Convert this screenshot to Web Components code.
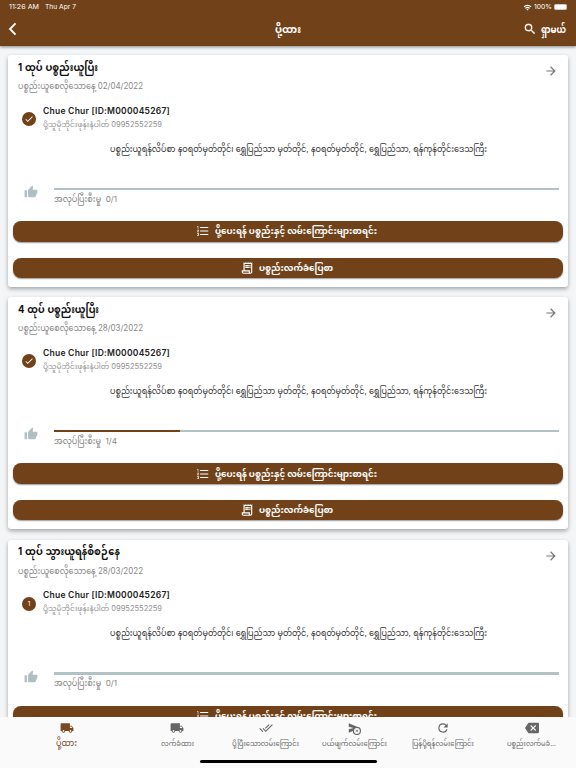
<!DOCTYPE html>
<html lang="my"><head><meta charset="utf-8"><title>ပို့ထား</title>
<style>
html,body{margin:0;height:100%;overflow:hidden}
body{font-family:Inter,"Noto Sans Myanmar",Padauk,"Noto Sans",sans-serif;background:#f3f5f7;color:#111}
</style></head><body>
<delivery-app></delivery-app>
<script>
const ICONS={
back:'<path d="M15.8 3.5 7.5 12l8.3 8.5" fill="none" stroke="currentColor" stroke-width="2.8"/>',
search:'<path d="M15.5 14h-.79l-.28-.27A6.47 6.47 0 0 0 16 9.5 6.5 6.5 0 1 0 9.5 16c1.61 0 3.09-.59 4.23-1.57l.27.28v.79l5 4.99L20.49 19zm-6 0a4.5 4.5 0 1 1 0-9 4.5 4.5 0 0 1 0 9z" stroke="currentColor" stroke-width=".4"/>',
wifi:'<path d="M1.5 9.2a15 15 0 0 1 21 0l-2.3 2.4a11.6 11.6 0 0 0-16.4 0zM5.3 13a9.6 9.6 0 0 1 13.4 0l-2.4 2.4a6.1 6.1 0 0 0-8.6 0zM9 16.8a4.3 4.3 0 0 1 6 0L12 20z"/>',
arrow:'<path d="m12 4-1.41 1.41L16.17 11H4v2h12.17l-5.58 5.59L12 20l8-8z"/>',
check:'<path d="M9 16.17 4.83 12l-1.42 1.41L9 19 21 7l-1.41-1.41z"/>',
thumb:'<path d="M1 21h4V9H1v12zm22-11c0-1.1-.9-2-2-2h-6.31l.95-4.57.03-.32c0-.41-.17-.79-.44-1.06L14.17 1 7.59 7.59C7.22 7.95 7 8.45 7 9v10c0 1.1.9 2 2 2h9c.83 0 1.54-.5 1.84-1.22l3.02-7.05c.09-.23.14-.47.14-.73z"/>',
list:'<path d="M2 17h2v.5H3v1h1v.5H2v1h3v-4H2zm1-9h1V4H2v1h1zm-1 3h1.8L2 13.1v.9h3v-1H3.200L5 10.900V10H2zm5-6v2h14V5zm0 14h14v-2H7zm0-6h14v-2H7z"/>',
receipt:'<path d="M19.5 3.500 18 2l-1.500 1.500L15 2l-1.500 1.500L12 2l-1.500 1.500L9 2 7.500 3.500 6 2v14H3v3c0 1.660 1.340 3 3 3h12c1.660 0 3-1.340 3-3V2zM15 20H6c-.55 0-1-.45-1-1v-1h10zm4-1c0 .55-.45 1-1 1s-1-.45-1-1v-3H8V5h11z"/><path d="M9 7h6v2H9zm7 0h2v2h-2zm-7 3h6v2H9zm7 0h2v2h-2z"/>',
truck:'<path d="M20 8h-3V4H3c-1.100 0-2 .9-2 2v11h2c0 1.660 1.340 3 3 3s3-1.340 3-3h6c0 1.660 1.340 3 3 3s3-1.340 3-3h2v-5zM6 18.500a1.500 1.500 0 1 1 0-3 1.500 1.500 0 0 1 0 3zm13.500-9 1.960 2.500H17V9.500zm-1.500 9a1.500 1.500 0 1 1 0-3 1.500 1.500 0 0 1 0 3z"/>',
done:'<path d="m18 7-1.410-1.410-6.340 6.340 1.410 1.410zm4.240-1.410L11.660 16.170 7.480 12l-1.410 1.410L11.660 19l12-12zM.41 13.410 6 19l1.410-1.410L1.830 12z"/>',
cancel:'<path d="M17 10c.1 0 .19.010.28.010L3 4v6l8 2-8 2v6l7-2.950A7 7 0 1 0 17 10zm0 12a5 5 0 1 1 0-10 5 5 0 0 1 0 10z"/><path d="m15.300 14.600-.7.7 1.700 1.700-1.700 1.700.7.7 1.700-1.700 1.700 1.700.7-.7-1.700-1.700 1.700-1.700-.7-.7-1.700 1.700z"/>',
refresh:'<path d="M17.650 6.350A7.960 7.960 0 0 0 12 4a8 8 0 1 0 7.730 10h-2.080A6 6 0 1 1 12 6c1.660 0 3.140.69 4.220 1.780L13 11h7V4z"/>',
erase:'<path d="M22 3H7c-.69 0-1.230.35-1.590.88L0 12l5.410 8.110c.36.53.9.89 1.590.89h15c1.100 0 2-.9 2-2V5c0-1.100-.9-2-2-2zm-3 12.590L17.590 17 14 13.410 10.410 17 9 15.590 12.590 12 9 8.410 10.410 7 14 10.590 17.590 7 19 8.410 15.410 12z"/>'};
const define=(name,render)=>customElements.define(name,class extends HTMLElement{
  connectedCallback(){if(this.shadowRoot)return;this.attachShadow({mode:'open'}).innerHTML=render(this)}
});
define('ui-icon',e=>`<style>:host{display:block;flex:none;width:${e.getAttribute('size')}px;height:${e.getAttribute('size')}px}svg{display:block;width:100%;height:100%}</style><svg viewBox="0 0 24 24" fill="currentColor">${ICONS[e.getAttribute('name')]}</svg>`);
/* One line of text condensed or widened to a given measure. */
customElements.define('fit-text',class extends HTMLElement{
  connectedCallback(){
    if(this.shadowRoot)return;
    const w=+this.getAttribute('w');
    this.attachShadow({mode:'open'}).innerHTML=`<style>:host{display:flex;align-items:center;flex:none;width:${w}px;white-space:pre}span{flex:none;transform-origin:0 50%;line-height:inherit}</style><span><slot></slot></span>`;
    const s=this.shadowRoot.querySelector('span'),m=s.getBoundingClientRect().width;
    if(m)s.style.transform=`scaleX(${w/m})`;
  }
});
define('status-bar',()=>`<style>
:host{display:flex;height:14px;padding:0 9px;align-items:center;font-size:6.8px;line-height:14px}
.r{margin-left:auto;display:flex;align-items:center;gap:2px}.d{margin-left:6px}
.b{width:11px;height:4.5px;border-radius:1.5px;background:#fff;border:.5px solid #d8c8ba}
</style><fit-text w="30">11:26 AM</fit-text><fit-text class="d" w="31">Thu Apr 7</fit-text><div class="r"><ui-icon name="wifi" size="9"></ui-icon><fit-text w="18">100%</fit-text><div class="b"></div></div>`);
define('app-header',()=>`<style>
:host{display:block;height:46px;background:#714219;color:#fff;box-shadow:0 1px 3px #0007;position:relative;z-index:2}
.bar{display:grid;grid-template-columns:1fr auto 1fr;height:30.5px;align-items:center;padding:0 10px 0 5px;font-weight:700;line-height:20px;font-size:10px}
.s{display:flex;justify-content:flex-end;align-items:center;gap:4px}.t{margin-left:5px}
</style><status-bar></status-bar><div class="bar"><ui-icon name="back" size="16"></ui-icon><fit-text class="t" w="26">ပို့ထား</fit-text><div class="s"><ui-icon name="search" size="14"></ui-icon><fit-text w="25">ရှာမယ်</fit-text></div></div>`);
define('action-button',e=>`<style>
:host{display:flex;height:20.5px;border-radius:8px;background:#714219;color:#fff;align-items:center;justify-content:center;gap:5px;font-size:9px;font-weight:700;line-height:20px;box-shadow:0 1px 1.5px #0006;padding-right:3px}
</style><ui-icon name="${e.getAttribute('icon')}" size="14"></ui-icon><slot></slot>`);
define('order-card',e=>{const a=n=>e.getAttribute(n);return `<style>
:host{display:flex;flex-direction:column;flex:none;box-sizing:border-box;height:231.5px;padding:3px 5px 0;background:#fff;border-radius:3px;box-shadow:0 2px 4px #0005}
.top{display:flex;justify-content:space-between;padding:0 5px 0 5px;height:18px}
.title{font-size:10.5px;font-weight:700;word-spacing:.6px;line-height:18px;height:18px;color:#111;margin-top:.5px}
.arrow{color:#777;margin-top:6px}
.date{font-size:8.3px;line-height:20px;height:20px;margin-left:5px;color:#888}
.person{display:flex;align-items:center;margin:7px 0 0 9px;gap:7px;height:28px}
.dot{width:14px;height:14px;border-radius:50%;background:#714219;color:#fff;display:flex;align-items:center;justify-content:center;font-size:6.5px;line-height:14px;margin-top:4px}
.name{font-size:8.8px;font-weight:600;letter-spacing:.25px;line-height:14px;height:14px;color:#222}
.phone{font-size:7.8px;line-height:13px;height:13px;color:#909090}
.addr{display:flex;justify-content:center;height:22px;line-height:22px;font-size:8.5px;margin:6.500px 0 0 20px;color:#333}
.prog{display:flex;align-items:flex-start;gap:16px;margin:25.500px 4px 0 11px;height:36px;box-sizing:border-box;color:#afbfc3}
.g{flex:1;padding-top:2.500px}.line{height:2.5px;background:#b1c1c4}.fill{height:100%;background:#714219;width:${a('done')}%}
.lab{font-size:8px;line-height:17px;height:17px;color:#858585;margin-top:.5px}
action-button+action-button{margin-top:16px}
</style>
<div class="top"><fit-text class="title" w="${a('tw')}">${a('heading')}</fit-text><ui-icon class="arrow" name="arrow" size="14"></ui-icon></div>
<fit-text class="date" w="125">ပစ္စည်းယူစေလိုသောနေ့ ${a('date')}</fit-text>
<div class="person"><div class="dot">${a('step')?a('step'):'<ui-icon name="check" size="10"></ui-icon>'}</div><div><fit-text class="name" w="127">Chue Chur [ID:M000045267]</fit-text><fit-text class="phone" w="119">ပို့သူမိုဘိုင်းဖုန်းနံပါတ် 09952552259</fit-text></div></div>
<div class="addr"><fit-text w="377">ပစ္စည်းယူရန်လိပ်စာ နဝရတ်မှတ်တိုင်၊ ရွှေပြည်သာ မှတ်တိုင်, နဝရတ်မှတ်တိုင်, ရွှေပြည်သာ, ရန်ကုန်တိုင်းဒေသကြီး</fit-text></div>
<div class="prog"><ui-icon name="thumb" size="14"></ui-icon><div class="g"><div class="line"><div class="fill"></div></div><fit-text class="lab" w="63">အလုပ်ပြီးစီးမှု  ${a('count')}</fit-text></div></div>
<action-button icon="list"><fit-text w="162">ပို့ပေးရန် ပစ္စည်းနှင့် လမ်းကြောင်းများစာရင်း</fit-text></action-button>
${e.hasAttribute('no-receipt')?'':'<action-button icon="receipt"><fit-text w="74">ပစ္စည်းလက်ခံပြေစာ</fit-text></action-button>'}`});
define('nav-item',e=>`<style>
:host{display:flex;flex-direction:column;align-items:center;color:#666;font-size:7.5px}
:host([active]){color:#7b491f}
fit-text{line-height:14px;height:14px;margin-top:2px}
:host([active]) fit-text{font-size:8.5px;margin-top:1px}
</style><ui-icon name="${e.getAttribute('icon')}" size="14"></ui-icon><fit-text w="${e.getAttribute('w')}"><slot></slot></fit-text>`);
define('bottom-nav',()=>`<style>
:host{display:flex;flex-direction:column;height:51px;background:#fafafa;position:relative;z-index:2}
.n{display:grid;grid-template-columns:133px repeat(5,1fr);padding-top:4px;height:39px;box-sizing:border-box}
.h{width:177px;height:3px;border-radius:2px;background:#000;align-self:center;margin-top:4px}
</style><div class="n"><nav-item active icon="truck" w="21">ပို့ထား</nav-item><nav-item icon="truck" w="33">လက်ခံထား</nav-item><nav-item icon="done" w="67">ပို့ပြီးသောလမ်းကြောင်း</nav-item><nav-item icon="cancel" w="65">ပယ်ဖျက်လမ်းကြောင်း</nav-item><nav-item icon="refresh" w="62">ပြန်ပို့ရန်လမ်းကြောင်း</nav-item><nav-item icon="erase" w="49">ပစ္စည်းလက်မခံ...</nav-item></div><div class="h"></div>`);
define('delivery-app',()=>`<style>
:host{display:flex;flex-direction:column;height:768px;width:576px}
main{flex:1;min-height:0;overflow:hidden;display:flex;flex-direction:column;gap:10.800px;padding:9px 8px 0}
</style><app-header></app-header><main>
<order-card heading="1 ထုပ် ပစ္စည်းယူပြီး" tw="80" date="02/04/2022" done="0" count="0/1"></order-card>
<order-card heading="4 ထုပ် ပစ္စည်းယူပြီး" tw="81" date="28/03/2022" done="25" count="1/4"></order-card>
<order-card heading="1 ထုပ် သွားယူရန်စီစဉ်နေ" tw="102" date="28/03/2022" done="0" count="0/1" step="1" no-receipt></order-card>
</main><bottom-nav></bottom-nav>`);
</script></body></html>
